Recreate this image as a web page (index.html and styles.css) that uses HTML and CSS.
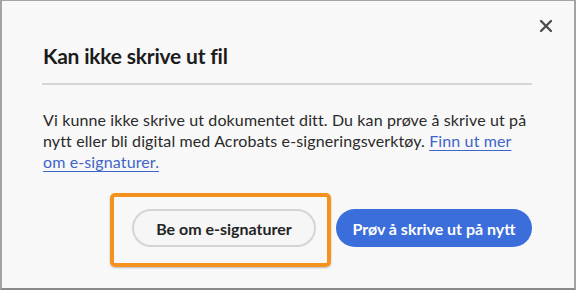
FILE: index.html
```html
<!DOCTYPE html>
<html lang="no">
<head>
<meta charset="utf-8">
<link rel="stylesheet" href="styles.css">
</head>
<body>
<div class="frame">
  <div class="dialog">
    <div class="topbar">
      <button class="close" aria-label="Lukk">
        <svg width="14" height="14" viewBox="0 0 14 14"><path d="M2 2 L12 12 M12 2 L2 12" stroke="#4b4b4b" stroke-width="2.3" stroke-linecap="round"/></svg>
      </button>
    </div>
    <h1 class="title">Kan ikke skrive ut fil</h1>
    <div class="divider"></div>
    <p class="text">Vi kunne ikke skrive ut dokumentet ditt. Du kan prøve å skrive ut på nytt eller bli digital med Acrobats e-signeringsverktøy. <a href="#" class="link">Finn ut mer <span class="nowrap">om e-signaturer.</span></a></p>
    <div class="footer">
      <div class="focus-wrap">
        <button class="btn btn-secondary">Be om e-signaturer</button>
        <div class="focus-ring"></div>
      </div>
      <button class="btn btn-primary">Prøv å skrive ut på nytt</button>
    </div>
  </div>
</div>
</body>
</html>
```
FILE: styles.css
```css
html, body {
  margin: 0;
  padding: 0;
  background: #f8f8f8;
}
.frame {
  box-sizing: border-box;
  width: 576px;
  height: 290px;
  border: 2px solid #a3a3a3;
  border-top-width: 1px;
  border-bottom-color: #8a8a8a;
  background: #f8f8f8;
  overflow: hidden;
}
.dialog {
  padding: 16px 42px 0 40px;
  font-family: Lato, "Liberation Sans", sans-serif;
  color: #2c2c2c;
}
.topbar {
  display: flex;
  justify-content: flex-end;
  margin-right: -23px;
  height: 18px;
}
.close {
  border: 0;
  background: none;
  padding: 0;
  width: 18px;
  height: 18px;
  display: flex;
  align-items: center;
  justify-content: center;
}
.title {
  margin: 9px 0 0 1px;
  font-size: 21px;
  font-weight: 700;
  line-height: 24px;
  color: #1c1c1c;
  letter-spacing: -0.2px;
}
.divider {
  height: 2px;
  background: #d6d6d6;
  margin-top: 15px;
}
.text {
  margin: 24px 0 0 1px;
  font-size: 16px;
  line-height: 21px;
  letter-spacing: 0.12px;
  color: #2a2a2a;
}
.nowrap {
  white-space: nowrap;
}
.link {
  color: #3e64c9;
  text-decoration: underline;
  text-underline-offset: 3px;
}
.footer {
  display: flex;
  justify-content: flex-end;
  align-items: center;
  gap: 20px;
  margin-top: 37px;
}
.focus-wrap {
  position: relative;
}
.btn {
  font-family: Lato, "Liberation Sans", sans-serif;
  font-size: 16px;
  font-weight: 700;
  height: 38px;
  border-radius: 19px;
  padding: 0 12px;
}
.btn-secondary {
  width: 184px;
  background: #f6f6f6;
  border: 2px solid #d4d4d4;
  color: #242424;
}
.btn-primary {
  width: 196px;
  background: #3b6ddb;
  border: 0;
  color: #ffffff;
}
.focus-ring {
  position: absolute;
  left: -22px;
  right: -15px;
  top: -16px;
  bottom: -20px;
  border: 4px solid #f5921e;
  border-radius: 5px;
  box-shadow: 0 1px 2px rgba(0,0,0,0.25);
  pointer-events: none;
}
```
